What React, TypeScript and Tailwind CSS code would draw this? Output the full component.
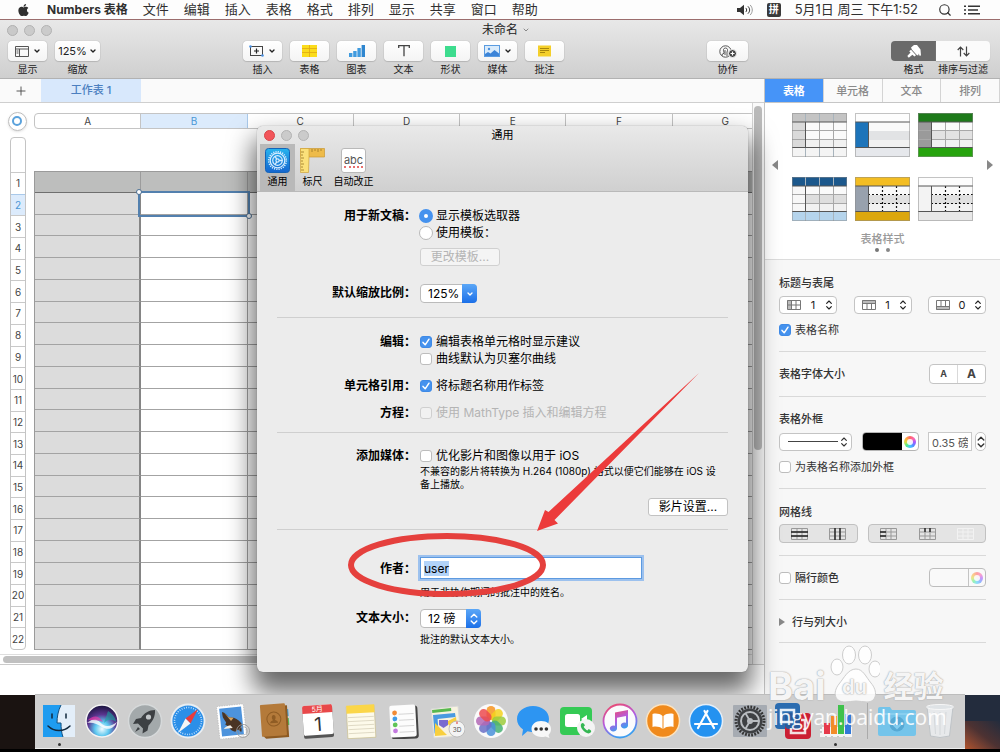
import * as React from "react";
import { useEffect, useRef, useState } from "react";
import { ChevronDown, Plus, Search } from "lucide-react";
import { FaApple } from "react-icons/fa";
import { clsx as cn } from "clsx";

const MENUS = ["文件", "编辑", "插入", "表格", "格式", "排列", "显示", "共享", "窗口", "帮助"];
const COLUMNS = ["A", "B", "C", "D", "E", "F", "G"];
const ROWS = Array.from({ length: 22 }, (_, i) => i + 1);

/* ---------- small shared controls ---------- */

const UpDown: React.FC<{ className?: string }> = ({ className }) => (
  <svg viewBox="0 0 8 12" className={cn("pointer-events-none h-3 w-2", className)} fill="none" stroke="currentColor" strokeWidth="1.4" strokeLinecap="round" strokeLinejoin="round">
    <path d="M1.2 4 4 1.2 6.8 4M1.2 8 4 10.8 6.8 8" />
  </svg>
);

interface CheckProps {
  label: string;
  defaultChecked?: boolean;
  disabled?: boolean;
  className?: string;
}

const Check: React.FC<CheckProps> = ({ label, defaultChecked, disabled, className }) => (
  <label className={cn("flex items-center gap-1", disabled && "text-[#b4b4b4]", className)}>
    <span className="relative flex h-3 w-3 shrink-0">
      <input
        type="checkbox"
        defaultChecked={defaultChecked}
        disabled={disabled}
        className="peer h-3 w-3 appearance-none rounded-[3px] border border-[#bdbdbd] bg-white checked:border-[#3f8ae6] checked:bg-[#4592ee] disabled:border-[#cfcfcf] disabled:bg-[#f1f1f1]"
      />
      <svg viewBox="0 0 12 12" className="pointer-events-none absolute inset-0 hidden peer-checked:block" fill="none" stroke="#fff" strokeWidth="1.5" strokeLinecap="round" strokeLinejoin="round">
        <path d="M3 6.4 5.2 8.8 9 3.2" />
      </svg>
    </span>
    {label}
  </label>
);

const Radio: React.FC<{ label: string; defaultChecked?: boolean }> = ({ label, defaultChecked }) => (
  <label className="-ml-px flex h-[17px] items-center gap-[3px]">
    <input
      type="radio"
      name="new-document"
      defaultChecked={defaultChecked}
      className="h-[14px] w-[14px] shrink-0 appearance-none rounded-full border border-[#b9b9b9] bg-white checked:border-[5px] checked:border-[#4592ee]"
    />
    {label}
  </label>
);

const TrafficLights: React.FC<{ active?: boolean; className?: string }> = ({ active, className }) => (
  <div className={cn("flex gap-[6px]", className)}>
    <button aria-label="关闭" className={cn("h-[11px] w-[11px] rounded-full border", active ? "border-[#d9454a] bg-[#f2555a]" : "border-[#b0b0b0] bg-[#c9c9c9]")} />
    <button aria-label="最小化" className="h-[11px] w-[11px] rounded-full border border-[#b3b3b3] bg-[#cbcbcb]" />
    <button aria-label="缩放窗口" className="h-[11px] w-[11px] rounded-full border border-[#b3b3b3] bg-[#cbcbcb]" />
  </div>
);

const ColorWheel: React.FC<{ faded?: boolean }> = ({ faded }) => (
  <span className={cn("flex h-3 w-3 items-center justify-center rounded-full bg-[conic-gradient(#f66,#f6a,#a5f,#58f,#4cf,#5e8,#dd4,#fa4,#f66)]", faded && "opacity-60")}>
    <span className="h-[6px] w-[6px] rounded-full bg-white/90" />
  </span>
);

/* ---------- menu bar ---------- */

const MenuBar = () => (
  <header className="flex h-5 shrink-0 items-center justify-between border-b border-[#9b6d6d] bg-[#fdfdfd] pr-5 pl-[17px] text-[13px] whitespace-nowrap text-[#303030]">
    <nav className="flex items-center gap-[15px]">
      <FaApple className="h-[14px] w-[13px]" />
      <button className="ml-[2px] text-[12px] font-bold">Numbers 表格</button>
      {MENUS.map((menu) => (
        <button key={menu} className="w-[26px]">{menu}</button>
      ))}
    </nav>
    <div className="flex items-center gap-5">
      <div className="flex items-center gap-[14px]">
        <svg viewBox="0 0 16 12" className="h-3 w-4" fill="none" stroke="#333" strokeLinecap="round">
          <path d="M0 4h3l4-3.2v10.4L3 8H0z" fill="#333" stroke="none" />
          <path d="M9 4.2c1 1 1 2.6 0 3.6M11.2 2.6c2 2 2 4.8 0 6.8" />
          <path d="M13.4 1.2c2.6 2.8 2.6 6.8 0 9.6" stroke="#999" />
        </svg>
        <span className="flex h-[14px] w-[14px] items-center justify-center rounded-xs bg-[#3a3a3a] text-[10px] font-bold text-white">拼</span>
        <span>5月1日 周三 下午1:52</span>
      </div>
      <div className="flex items-center gap-3">
        <Search className="h-[14px] w-[14px]" strokeWidth={2} />
        <svg viewBox="0 0 16 10" className="h-[10px] w-4" stroke="#333" strokeWidth="1.6">
          <path d="M0 1.2h2M4 1.2h12M0 5h2M4 5h10M0 8.8h2M4 8.8h12" />
        </svg>
      </div>
    </div>
  </header>
);

/* ---------- window toolbar ---------- */

const Chevron = () => <ChevronDown className="h-2 w-2" strokeWidth={4} />;

const TOOL_ICONS: Record<string, React.ReactNode> = {
  插入: (
    <svg viewBox="0 0 15 12" className="h-3 w-[15px]" fill="none" stroke="#444">
      <rect x="1.5" y="1.5" width="12" height="9" />
      <path d="M7.5 3.5v5M5 6h5" stroke="#222" strokeWidth="1.2" />
      <circle cx="1.5" cy="1.5" r="1.3" fill="#4a90e2" stroke="none" />
      <circle cx="13.5" cy="10.5" r="1.3" fill="#4a90e2" stroke="none" />
    </svg>
  ),
  表格: (
    <svg viewBox="0 0 15 12" className="h-3 w-[15px]">
      <rect width="15" height="12" fill="#fbdc1b" />
      <path d="M7.5 0v12M0 3.5h15M0 7.5h15" stroke="#e0a812" strokeWidth=".8" />
    </svg>
  ),
  图表: (
    <svg viewBox="0 0 16 12" className="h-3 w-4" fill="#3f9bdf">
      <rect y="8" width="3.4" height="4" />
      <rect x="4.2" y="6" width="3.4" height="6" />
      <rect x="8.4" y="3" width="3.4" height="9" />
      <rect x="12.6" width="3.4" height="12" fill="#2f86cf" />
    </svg>
  ),
  文本: (
    <svg viewBox="0 0 12 12" className="h-3 w-3" fill="none" stroke="#444" strokeWidth="1.3">
      <path d="M.7 3V.7h10.600V3M6 .7v10.600" />
    </svg>
  ),
  形状: <span className="h-[11px] w-[11px] bg-[#3ddc8e]" />,
  媒体: (
    <svg viewBox="0 0 16 12" className="h-3 w-4">
      <rect x=".5" y=".5" width="15" height="11" fill="#d9ebfb" stroke="#5a9be0" />
      <circle cx="5" cy="4" r="1.2" fill="#4a8fdd" />
      <path d="M1 11V9l3-2 2.500 1.500L10.500 5 15 8.500V11z" fill="#3c84d8" />
    </svg>
  ),
  批注: (
    <svg viewBox="0 0 13 12" className="h-3 w-[13px]">
      <rect y=".5" width="13" height="11" fill="#f4cf2a" />
      <path d="M2 3.500h9M2 5.500h9M2 7.500h5" stroke="#a8860c" strokeWidth="1" />
    </svg>
  ),
};

interface ToolProps {
  label: string;
  width?: string;
  menu?: boolean;
  children: React.ReactNode;
}

const Tool: React.FC<ToolProps> = ({ label, width = "w-[39px]", menu, children }) => (
  <button className={cn("flex flex-col items-center", width)}>
    <span className="flex h-5 w-full items-center justify-center gap-1 rounded-sm bg-linear-to-b from-white to-[#f4f4f4] shadow-[0_0_1px_#888,0_1px_1px_#bbb]">
      {children}
      {menu && <Chevron />}
    </span>
    <span className="mt-px text-[10px] leading-[14px]">{label}</span>
  </button>
);

const Toolbar = () => (
  <div className="shrink-0 border-b border-[#b2b2b2] bg-linear-to-b from-[#e8e8e8] to-[#cfcfcf] text-[#222]">
    <div className="grid h-5 grid-cols-3 items-center">
      <TrafficLights className="pl-[7px]" />
      <button className="flex items-center justify-center gap-1 pl-3 text-[12px]">
        未命名
        <ChevronDown className="h-2 w-2 text-[#888]" strokeWidth={3} />
      </button>
    </div>
    <div className="flex justify-between pt-px pr-[10px] pb-[2px] pl-2">
      <div className="flex gap-2">
        <Tool label="显示" menu>
          <svg viewBox="0 0 14 11" className="h-[11px] w-[14px]" fill="none" stroke="#555">
            <path d="M.5.5h13v10H.5zM.5 3h13M4.500 3v7.500M1.500 5h2M1.500 7h2" />
          </svg>
        </Tool>
        <Tool label="缩放" width="w-[45px]">
          <span className="flex items-center gap-[2px] text-[11px]">125%<Chevron /></span>
        </Tool>
      </div>
      <div className="flex gap-2">
        {Object.keys(TOOL_ICONS).map((name) => (
          <Tool key={name} label={name} menu={name === "插入" || name === "媒体"}>
            {TOOL_ICONS[name]}
          </Tool>
        ))}
      </div>
      <Tool label="协作" width="w-[41px]">
        <svg viewBox="0 0 18 13" className="h-[13px] w-[18px]" fill="none" stroke="#555">
          <circle cx="6.5" cy="6.5" r="5.7" />
          <path d="M3 11V9.500l2-1.300V7C4 5.500 4.200 3 6.500 3s2.500 2.500 1.500 4v4M6 5v5" />
          <circle cx="13.5" cy="8.5" r="4" fill="#444" stroke="#f8f8f8" />
          <path d="M13.500 6.500v4M11.500 8.500h4" stroke="#fff" strokeWidth="1.2" />
        </svg>
      </Tool>
      <div className="flex">
        <button className="flex w-[45px] flex-col items-center">
          <span className="flex h-5 w-full items-center justify-center rounded-l-sm bg-[#6a6a6a]">
            <svg viewBox="0 0 16 14" className="h-[14px] w-4" fill="#fff">
              <path d="M5 3.500 8 1h3l3.500 4.500.5 6-1.500.3-.7-2.300-.6 2-1.400-.4L6 5.800z" />
              <path d="m5 5.800 5 5.400-1.600 1.300-2-1.700-3.600 2.900L1.300 12l3.200-3.400-1.300-1.400z" />
            </svg>
          </span>
          <span className="mt-px text-[10px] leading-[14px]">格式</span>
        </button>
        <button className="flex w-[54px] flex-col items-center whitespace-nowrap">
          <span className="flex h-5 w-full items-center justify-center rounded-r-sm bg-[#fbfbfb] shadow-[0_1px_1px_#bbb]">
            <svg viewBox="0 0 13 11" className="h-[11px] w-[13px]" fill="none" stroke="#444" strokeWidth="1.2">
              <path d="M3.500 10.500v-9M.7 4 3.500 1.200 6.300 4M9.500.5v9M6.700 7l2.800 2.800L12.300 7" />
            </svg>
          </span>
          <span className="mt-px text-[10px] leading-[14px]">排序与过滤</span>
        </button>
      </div>
    </div>
  </div>
);

/* ---------- spreadsheet ---------- */

const SheetTable = () => (
  <table className="h-full w-[746px] table-fixed border-separate border-spacing-0 border-l border-[#9a9a9a]">
    <tbody>
      {ROWS.map((row) => (
        <tr key={row} className="h-1/22">
          {COLUMNS.map((col) => (
            <td
              key={col}
              aria-label={`${col}${row}`}
              className={cn(
                "border-b p-0",
                row === 1 && "border-t border-r border-[#6f6f6f] border-t-[#9a9a9a] border-r-[#9c9c9c] bg-[#bdbebd]",
                row > 1 && "border-[#a3a3a3]",
                row > 1 && col === "A" && "border-r-2 border-r-[#858585] bg-[#dcdcdc]",
                row > 1 && col !== "A" && "border-r bg-white",
                row === 2 && col === "B" && "relative"
              )}
            >
              {row === 2 && col === "B" && (
                <div className="absolute -inset-x-[3px] -top-[2px] -bottom-[3px] z-10 border-2 border-[#5380ae]">
                  <i className="absolute -top-1 -left-1 h-[6px] w-[6px] rounded-full border border-[#4b6f94] bg-white" />
                  <i className="absolute -right-1 -bottom-1 h-[6px] w-[6px] rounded-full border border-[#4b6f94] bg-white" />
                </div>
              )}
            </td>
          ))}
        </tr>
      ))}
    </tbody>
  </table>
);

const Sheet = () => (
  <section className="flex min-w-0 flex-1 flex-col bg-white">
    <div className="flex h-6 shrink-0 border-b border-[#cfcfcf] bg-[#fafafa]">
      <button aria-label="添加工作表" className="flex w-[41px] items-center justify-center text-[#444]">
        <Plus className="h-[14px] w-[14px]" strokeWidth={1.5} />
      </button>
      <button className="w-[100px] bg-[#d8e8fc] text-[11px] font-medium text-[#4c7fc0]">工作表 1</button>
    </div>
    <div className="flex min-h-0 flex-1 border-b border-[#cbcbcb]">
      <div className="flex min-w-0 flex-1 flex-col overflow-hidden">
        <div className="mt-2 flex h-5 shrink-0 items-center">
          <div className="flex w-[34px] shrink-0 justify-center">
            <button aria-label="全选" className="flex h-[19px] w-[19px] items-center justify-center rounded-full border border-[#bdbdbd] shadow-sm">
              <span className="h-[10px] w-[10px] rounded-full border-2 border-[#5ba2dc]" />
            </button>
          </div>
          <div className="flex h-4 w-[746px] shrink-0 rounded-sm border border-[#c4c4c4] text-[10px] text-[#444]">
            {COLUMNS.map((col) => (
              <span key={col} className={cn("flex flex-1 items-center justify-center border-r", col === "B" ? "border-[#a9c9ea] bg-[#dcebfc] text-[#4a97d6]" : "border-[#c4c4c4]")}>
                {col}
              </span>
            ))}
          </div>
        </div>
        <div className="mt-[6px] flex min-h-0 flex-1">
          <div className="w-[34px] shrink-0 pl-[10px]">
            <ol className="flex h-full w-4 flex-col rounded-sm border border-[#c4c4c4] text-[10px] text-[#444]">
              <li className="h-[34px] shrink-0" />
              {ROWS.map((row) => (
                <li key={row} className={cn("flex min-h-0 flex-1 items-center justify-center border-t leading-none", row === 2 ? "border-[#a9c9ea] bg-[#dcebfc] text-[#4a97d6]" : "border-[#c9c9c9]")}>
                  {row}
                </li>
              ))}
            </ol>
          </div>
          <div className="min-w-0 flex-1 overflow-hidden pt-[34px]">
            <SheetTable />
          </div>
        </div>
        <div className="mt-1 flex h-[10px] shrink-0 items-center border-t border-[#dedede] pr-1 pl-[3px]">
          <div className="h-[7px] w-full rounded-full bg-[#c0c0c0]" />
        </div>
      </div>
      <div className="w-3 shrink-0 border-l border-[#d4d4d4] bg-[#fafafa] py-[3px] pl-px">
        <div className="h-[62%] w-2 rounded-full bg-[#bababa]" />
      </div>
    </div>
    <div className="h-[30px] shrink-0" />
  </section>
);

/* ---------- inspector ---------- */

interface Style {
  head: string;
  side: string;
  foot: string;
  band: string;
  grid?: "solid" | "dotted";
  ticks?: boolean;
}

const STYLES: Style[] = [
  { head: "#c4c4c4", side: "#dadada", foot: "#f4f4f4", band: "#fafafa", grid: "solid", ticks: true },
  { head: "#fdfdfd", side: "#1d74ba", foot: "#e6e8ec", band: "#e2e3e5" },
  { head: "#1e7a1a", side: "#9a9a9a", foot: "#27a30e", band: "#e2e2e2", grid: "solid" },
  { head: "#1c588c", side: "#f7f7f7", foot: "#b5d4ec", band: "#dedede", grid: "solid", ticks: true },
  { head: "#f3bd23", side: "#98a1ad", foot: "#dca70e", band: "#e0e0e0", grid: "dotted" },
  { head: "#fdfdfd", side: "#f3f3f3", foot: "#e8e8e8", band: "#e0e0e0", grid: "dotted" },
];

const StyleThumb: React.FC<{ style: Style }> = ({ style }) => (
  <svg viewBox="0 0 55 44" className="h-[44px] w-[55px]">
    <rect width="55" height="44" fill="#fafafa" />
    <rect x="13" y="18" width="42" height="9" fill={style.band} />
    <rect x="13" y="27" width="42" height="8" fill="#f1f1f1" />
    <rect y="9" width="13" height="26" fill={style.side} />
    <rect width="55" height="9" fill={style.head} />
    <rect y="35" width="55" height="9" fill={style.foot} />
    {style.grid === "solid" && <path d="M27.500 9v26M41.500 9v26M0 17.500h55M0 26.500h55" stroke="#a8a8a8" />}
    {style.grid === "dotted" && <path d="M27.500 9v26M41.500 9v26M13 17.500h42M13 26.500h42" stroke="#111" strokeWidth="1.2" strokeDasharray="2 2" />}
    {style.ticks && <path d="M13.500 0v9M27.500 0v9M41.500 0v9M13.500 35v9M27.500 35v9M41.500 35v9" stroke="#a8b4bd" />}
    <path d="M0 9h55M0 34.500h55M13.500 9v26" stroke="#555" />
    <rect x=".5" y=".5" width="54" height="43" fill="none" stroke="#8a8a8a" strokeOpacity=".5" />
  </svg>
);

const MiniGrid: React.FC<{ bold?: string; faded?: boolean }> = ({ bold, faded }) => (
  <svg viewBox="0 0 17 12" className="h-3 w-[17px]" fill="none" stroke={faded ? "#f2f2f2" : "#999"}>
    <path d="M.5.5h16v11H.5zM.5 4h16M.5 8h16M6 .5v11M11 .5v11" />
    {bold && <path d={bold} stroke="#222" strokeWidth="1.4" />}
  </svg>
);

const COUNTS = [
  { label: "标题列", value: 1, fill: "M0 0h4v9H0z", lines: "M4.500 .5v9M9 .5v9M.5 5h13" },
  { label: "标题行", value: 1, fill: "M0 0h14v3.500H0z", lines: "M.5 3.500h13M5 3.500v6M9.500 3.500v6" },
  { label: "表尾行", value: 0, fill: "M0 6h14v4H0z", lines: "M.5 6.500h13M5 .5v6M9.500 .5v6" },
];

const Group: React.FC<{ className?: string; children: React.ReactNode }> = ({ className, children }) => (
  <div className={cn("border-b border-[#d9d9d9]", className)}>{children}</div>
);

const InspectorTabs = () => {
  const [active, setActive] = useState("表格");
  return (
    <div className="grid h-6 shrink-0 grid-cols-4 border-b border-[#c6c6c6] bg-[#fafafa] text-[11px]">
      {["表格", "单元格", "文本", "排列"].map((tab) => (
        <button
          key={tab}
          onClick={() => setActive(tab)}
          className={cn("border-r border-[#d4d4d4]", active === tab ? "bg-[#4694f8] font-bold text-white" : "font-medium text-[#8a8a8a]")}
        >
          {tab}
        </button>
      ))}
    </div>
  );
};

const Inspector = () => (
  <aside className="flex w-[236px] shrink-0 flex-col border-l border-[#c4c4c4] bg-[#f7f7f7] text-[11px] leading-4 text-[#333]">
    <InspectorTabs />
    <div className="flex shrink-0 items-center justify-between border-b border-[#dcdcdc] bg-white px-[7px] pt-[10px] pb-[7px] text-[#888]">
      <button aria-label="上一页" className="mb-9">
        <svg viewBox="0 0 6 10" className="h-[10px] w-[6px]" fill="currentColor"><path d="M6 0v10L0 5z" /></svg>
      </button>
      <div>
        <div className="grid grid-cols-3 gap-x-2 gap-y-5">
          {STYLES.map((style, i) => (
            <button key={i} aria-label={`样式 ${i + 1}`}><StyleThumb style={style} /></button>
          ))}
        </div>
        <p className="mt-[10px] text-center font-medium text-[#999]">表格样式</p>
        <div className="mt-px flex justify-center gap-[7px]">
          <i className="h-1 w-1 rounded-full bg-[#777]" />
          <i className="h-1 w-1 rounded-full bg-[#888]" />
        </div>
      </div>
      <button aria-label="下一页" className="mb-9">
        <svg viewBox="0 0 6 10" className="h-[10px] w-[6px]" fill="currentColor"><path d="M0 0v10l6-5z" /></svg>
      </button>
    </div>

    <div className="px-[14px]">
      <Group className="pt-[15px] pb-[13px]">
        <h3 className="font-medium">标题与表尾</h3>
        <div className="mt-[5px] flex justify-between">
          {COUNTS.map((item) => (
            <button key={item.label} aria-label={item.label} className="flex h-[18px] w-[58px] items-center justify-between rounded-sm border border-[#c4c4c4] bg-white pr-[3px] pl-[7px] text-[#222]">
              <svg viewBox="0 0 14 10" className="h-[10px] w-[14px]" fill="none" stroke="#777">
                <path d={item.fill} fill="#bbb" stroke="none" />
                <path d="M.5.5h13v9H.5z" />
                <path d={item.lines} />
              </svg>
              <span>{item.value}</span>
              <UpDown className="h-[10px]" />
            </button>
          ))}
        </div>
        <Check label="表格名称" defaultChecked className="mt-2" />
      </Group>

      <Group className="flex items-center justify-between py-3">
        <h3 className="font-medium">表格字体大小</h3>
        <div className="flex h-5 w-[57px] rounded-sm border border-[#c4c4c4] bg-white font-bold text-[#444]">
          <button aria-label="缩小字体" className="flex-1 border-r border-[#d9d9d9] text-[9px]">A</button>
          <button aria-label="放大字体" className="flex-1 text-[12px]">A</button>
        </div>
      </Group>

      <Group className="pt-[14px] pb-[13px]">
        <h3 className="font-medium">表格外框</h3>
        <div className="mt-[5px] flex items-center justify-between">
          <button aria-label="线条样式" className="flex h-[18px] w-[73px] items-center justify-between rounded-sm border border-[#c4c4c4] bg-white pr-[3px] pl-2">
            <span className="h-px w-[50px] bg-[#444]" />
            <UpDown className="h-[10px]" />
          </button>
          <button aria-label="边框颜色" className="flex h-[19px] w-[57px] overflow-hidden rounded-sm border border-[#b5b5b5] bg-white">
            <span className="h-full flex-1 bg-black" />
            <span className="flex h-full w-4 items-center justify-center"><ColorWheel /></span>
          </button>
          <div className="flex gap-[3px]">
            <input aria-label="边框宽度" defaultValue="0.35 磅" className="h-[19px] w-[44px] border border-[#c9c9c9] bg-white px-[3px] text-[11px] text-[#555]" />
            <button aria-label="调整宽度" className="flex h-[19px] w-[11px] items-center justify-center rounded-[5px] border border-[#c4c4c4] bg-white">
              <UpDown />
            </button>
          </div>
        </div>
        <Check label="为表格名称添加外框" className="mt-2" />
      </Group>

      <Group className="pt-[15px] pb-[12px]">
        <h3 className="font-medium">网格线</h3>
        <div className="mt-1 flex justify-between">
          <div className="flex h-[19px] w-[79px] rounded-sm border border-[#c1c1c1] bg-[#e4e4e4]">
            <button aria-label="横线" className="flex flex-1 items-center justify-center"><MiniGrid bold="M0 4h17M0 8h17" /></button>
            <button aria-label="竖线" className="flex flex-1 items-center justify-center"><MiniGrid bold="M6 0v12M11 0v12" /></button>
          </div>
          <div className="flex h-[19px] w-[118px] rounded-sm border border-[#c1c1c1] bg-[#e4e4e4]">
            <button aria-label="标题列网格线" className="flex flex-1 items-center justify-center"><MiniGrid bold="M0 4h6M0 8h6" /></button>
            <button aria-label="标题行网格线" className="flex flex-1 items-center justify-center"><MiniGrid bold="M6 0v4M11 0v4" /></button>
            <button aria-label="表尾网格线" className="flex flex-1 items-center justify-center"><MiniGrid faded /></button>
          </div>
        </div>
      </Group>

      <Group className="flex items-center justify-between py-3">
        <Check label="隔行颜色" className="font-medium" />
        <button aria-label="隔行填充颜色" className="flex h-[19px] w-[57px] rounded-sm border border-[#bdbdbd] bg-[#f9f9f9]">
          <span className="h-full flex-1 border-r border-[#c4c4c4]" />
          <span className="flex h-full w-4 items-center justify-center"><ColorWheel faded /></span>
        </button>
      </Group>

      <Group className="pt-[14px] pb-3">
        <button className="flex items-center gap-[7px] font-medium">
          <svg viewBox="0 0 6 8" className="h-2 w-[6px]" fill="#888"><path d="M0 0v8l6-4z" /></svg>
          行与列大小
        </button>
      </Group>
    </div>
  </aside>
);

/* ---------- preferences dialog ---------- */

const GearIcon: React.FC<{ className?: string }> = ({ className }) => (
  <svg viewBox="0 0 25 25" className={className} fill="none" stroke="#d5ecff">
    <defs>
      <linearGradient id="general" x2="0" y2="1">
        <stop stopColor="#27b4ee" />
        <stop offset="1" stopColor="#1465cf" />
      </linearGradient>
    </defs>
    <rect x=".5" y=".5" width="24" height="24" rx="3" fill="url(#general)" stroke="#1464b8" />
    <circle cx="12.5" cy="12.5" r="8.8" strokeWidth="1.6" strokeDasharray="1.2 1.1" />
    <circle cx="12.5" cy="12.5" r="7.3" strokeWidth="1.2" />
    <circle cx="12.5" cy="12.5" r="4.8" strokeWidth="1.2" />
    <circle cx="12.5" cy="12.5" r="1.6" strokeWidth="1.2" />
    <path d="M14.100 12.500h3.500M11.700 11.100 9.900 8.200M11.700 13.900l-1.800 2.900" strokeWidth="1.3" />
  </svg>
);

const RulerIcon: React.FC<{ className?: string }> = ({ className }) => (
  <svg viewBox="0 0 25 25" className={className}>
    <path d="M.5.5h24V9H.5z" fill="#eebb4a" stroke="#c89a35" strokeWidth=".7" />
    <path d="M.5.5H9V9l-.5 15.500h-8z" fill="#fbe07a" stroke="#cfa43c" strokeWidth=".7" />
    <path d="M1 4h3M1 7h2M1 10h3M1 13h2M1 16h3M1 19h2M1 22h3M12 1v3M15 1v2M18 1v3M21 1v2" stroke="#9b7626" strokeWidth=".8" />
  </svg>
);

const PANES = [
  { label: "通用", width: "w-[35px]", icon: <GearIcon className="h-[25px] w-[25px]" /> },
  { label: "标尺", width: "w-[35px]", icon: <RulerIcon className="h-[25px] w-[25px]" /> },
  {
    label: "自动改正",
    width: "w-[47px]",
    icon: (
      <span className="flex h-[25px] w-[25px] flex-col items-center justify-center rounded-[3px] border border-[#b9b9b9] bg-white text-[11px] leading-3 text-[#555]">
        abc
        <span className="w-[19px] border-b-2 border-dotted border-[#e8706e]" />
      </span>
    ),
  },
];

const FormRow: React.FC<{ label: string; className?: string; children: React.ReactNode }> = ({ label, className, children }) => (
  <div className={cn("grid grid-cols-[139px_1fr] gap-1", className)}>
    <div className="text-right leading-[17px] font-bold">{label}</div>
    <div>{children}</div>
  </div>
);

const Preferences = () => {
  const author = useRef<HTMLInputElement>(null);

  useEffect(() => {
    author.current?.focus();
    author.current?.select();
  }, []);

  return (
    <div role="dialog" aria-label="通用" className="absolute top-[126px] left-[257px] z-20 w-[491px] rounded-md bg-[#ececec] pb-[26px] text-[12px] text-black shadow-[0_0_1px_#666,0_16px_26px_4px_rgba(0,0,0,.6)]">
      <div className="rounded-t-md border-b border-[#b9b9b9] bg-linear-to-b from-[#e9e9e9] to-[#d0d0d0]">
        <div className="flex h-[18px] items-center">
          <TrafficLights active className="w-1/3 pl-[7px]" />
          <h2 className="w-1/3 text-center text-[11px]">通用</h2>
        </div>
        <div className="flex pl-[3px]">
          {PANES.map((pane, i) => (
            <button key={pane.label} className={cn("flex h-[47px] flex-col items-center pt-1 text-[10px] whitespace-nowrap", pane.width, i === 0 && "bg-[#b9b9b9]")}>
              {pane.icon}
              <span className="mt-px leading-[14px]">{pane.label}</span>
            </button>
          ))}
        </div>
      </div>

      <form className="px-5">
        <FormRow label="用于新文稿：" className="pt-[15px]">
          <Radio label="显示模板选取器" defaultChecked />
          <Radio label="使用模板：" />
          <button type="button" disabled className="mt-[7px] h-[18px] w-20 rounded-[3px] border border-[#d0d0d0] bg-[#f4f4f4] leading-4 text-[#b4b4b4]">更改模板...</button>
        </FormRow>
        <FormRow label="默认缩放比例：" className="mt-[18px] border-b border-[#cfcfcf] pb-[14px]">
          <div className="relative flex h-[19px] w-[57px]">
            <select aria-label="默认缩放比例" className="w-full appearance-none rounded-sm border border-[#bbb] bg-white pl-[7px] text-[12px] leading-4">
              <option>125%</option>
            </select>
            <span className="pointer-events-none absolute inset-y-0 right-0 flex w-[15px] items-center justify-center rounded-r-sm bg-linear-to-b from-[#5ba7f7] to-[#1a6fe8] text-white">
              <ChevronDown className="h-2 w-2" strokeWidth={4} />
            </span>
          </div>
        </FormRow>

        <FormRow label="编辑：" className="pt-[15px]">
          <Check label="编辑表格单元格时显示建议" defaultChecked className="h-[17px]" />
          <Check label="曲线默认为贝塞尔曲线" className="h-[17px]" />
        </FormRow>
        <FormRow label="单元格引用：" className="mt-[10px]">
          <Check label="将标题名称用作标签" defaultChecked className="h-[17px]" />
        </FormRow>
        <FormRow label="方程：" className="mt-[10px] border-b border-[#cfcfcf] pb-[11px]">
          <Check label="使用 MathType 插入和编辑方程" disabled className="h-[17px]" />
        </FormRow>

        <FormRow label="添加媒体：" className="pt-[14px]">
          <Check label="优化影片和图像以用于 iOS" className="h-[17px]" />
          <p className="mt-px mr-2 text-[10px] leading-[13px]">不兼容的影片将转换为 H.264 (1080p) 格式以便它们能够在 iOS 设备上播放。</p>
        </FormRow>
        <div className="flex justify-end border-b border-[#cfcfcf] pt-[7px] pb-[13px]">
          <button type="button" className="h-[18px] w-20 rounded-[3px] border border-[#c2c2c2] bg-white leading-4">影片设置...</button>
        </div>

        <FormRow label="作者：" className="items-center pt-[27px]">
          <input
            ref={author}
            aria-label="作者"
            defaultValue="user"
            className="block h-[22px] w-[222px] border border-[#5d9ae0] bg-white px-[3px] text-[12px] ring-2 ring-[#9cc1ee] outline-none selection:bg-[#b2d3f9] selection:text-black"
          />
        </FormRow>
        <FormRow label="" className="mt-[7px]">
          <p className="text-[10px] leading-[13px]">用于非协作期间的批注中的姓名。</p>
        </FormRow>
        <FormRow label="文本大小：" className="mt-[10px]">
          <div className="relative flex h-[19px] w-[61px]">
            <select aria-label="文本大小" className="w-full appearance-none rounded-sm border border-[#bbb] bg-white pl-[7px] text-[12px] leading-4">
              <option>12 磅</option>
            </select>
            <span className="pointer-events-none absolute inset-y-0 right-0 flex w-[15px] items-center justify-center rounded-r-sm bg-linear-to-b from-[#5ba7f7] to-[#1a6fe8] text-white">
              <UpDown />
            </span>
          </div>
          <p className="mt-[5px] text-[10px] leading-[13px]">批注的默认文本大小。</p>
        </FormRow>
      </form>
    </div>
  );
};

/* ---------- hand-drawn markup over the dialog ---------- */

const Markup = () => (
  <svg viewBox="0 0 352 225" className="pointer-events-none absolute top-[373px] left-[347px] z-30 h-[225px] w-[352px]" fill="#ec3b3b">
    <path d="M352 0 201.500 139l-3.500-2-8 21 21-7.500-3.500-3.500z" />
    <ellipse cx="100" cy="192" rx="96" ry="29" fill="none" stroke="#e5403d" strokeWidth="6" />
  </svg>
);

/* ---------- dock ---------- */

const Icon: React.FC<{ children: React.ReactNode }> = ({ children }) => (
  <svg viewBox="0 0 36 36" className="h-9 w-9">{children}</svg>
);

const DOCK: Array<{ name: string; running?: boolean; art: React.ReactNode }> = [
  {
    name: "访达",
    running: true,
    art: (
      <>
        <rect x="2" y="2" width="32" height="32" fill="#e3eef9" />
        <path d="M2 2h18c-3 6-4 12-4 18h4c0 5 .5 10 2 14H2z" fill="#1f9cf0" />
        <path d="M20 2c-3 6-4 12-4 18h4c0 5 .5 10 2 14" fill="none" stroke="#14507f" />
        <path d="M11 11v4M25 11v4M7 23c6 6 16 6 22 0" fill="none" stroke="#12283c" strokeWidth="1.5" strokeLinecap="round" />
      </>
    ),
  },
  {
    name: "Siri",
    art: (
      <>
        <defs>
          <radialGradient id="siri" cx=".5" cy=".75" r=".75">
            <stop stopColor="#f2fbff" />
            <stop offset=".3" stopColor="#5cc8ef" />
            <stop offset=".6" stopColor="#5b3590" />
            <stop offset="1" stopColor="#16123a" />
          </radialGradient>
        </defs>
        <circle cx="18" cy="18" r="16" fill="url(#siri)" stroke="#f4f4f4" strokeWidth="1.5" />
        <path d="M3 20c8-7 12-2 15 1s9 3 15-2c-4 8-10 8-15 5S9 19 3 20z" fill="#fff" fillOpacity=".8" />
        <path d="M24 8c6 4 8 8 8 11-4-3-8-3-12 1z" fill="#18a8a0" fillOpacity=".6" />
        <path d="M4 17c5-5 11-5 15 2-5-2-9-2-15-2z" fill="#e838a8" fillOpacity=".7" />
      </>
    ),
  },
  {
    name: "启动台",
    art: (
      <>
        <circle cx="18" cy="18" r="16.5" fill="#a3a9ab" stroke="#d6d9da" strokeWidth="1.5" />
        <path d="M28 7c-6 0-11 3-14 8l-5 1-3 5 5-.5 5 5-.5 5 5-3 1-5c4-4 7-9 6.500-15.500z" fill="#3c4043" />
        <circle cx="21.500" cy="14" r="2.6" fill="#c2c7c9" />
        <path d="m11 24-3 5 5-3z" fill="#3c4043" />
      </>
    ),
  },
  {
    name: "Safari",
    art: (
      <>
        <circle cx="18" cy="18" r="16.5" fill="#2b8fe8" stroke="#e9eef2" strokeWidth="1.8" />
        <circle cx="18" cy="18" r="13.5" fill="none" stroke="#d7ecff" strokeWidth="1.6" strokeDasharray=".8 1.56" />
        <path d="m28 6-7.500 14.500-5-5z" fill="#e93b3c" />
        <path d="M8 30 15.500 15.500l5 5z" fill="#f5f5f5" />
      </>
    ),
  },
  {
    name: "邮件",
    art: (
      <g transform="rotate(-6 18 18)">
        <rect x="4" y="2" width="27" height="33" fill="#fff" stroke="#bbb" strokeWidth=".8" strokeDasharray="1.5 1" />
        <rect x="6.500" y="4.500" width="22" height="28" fill="#4d93dc" />
        <path d="M9 8c3 1 5 4 6 6l5 1c4 2 6 4 8 8l-2 1c1 2 1 4 0 6l-3-3-3 2c-3-1-5-3-6-6l-3-2 1-2-2-4c-1-2-1-4-1-7z" fill="#4a3424" />
        <path d="m11 9 4 5 5 1-3 3z" fill="#d9a35c" />
        <path d="M9 25c2-2 4-3 7-3l2 3z" fill="#f4efe6" />
        <circle cx="28" cy="29" r="6.500" fill="none" stroke="#999" strokeWidth=".8" />
        <circle cx="28" cy="29" r="4" fill="none" stroke="#999" strokeWidth=".6" />
      </g>
    ),
  },
  {
    name: "通讯录",
    art: (
      <g transform="rotate(-4 18 18)">
        <rect x="28" y="7" width="4" height="7" fill="#4aa0d8" />
        <rect x="28" y="16" width="4" height="7" fill="#58b858" />
        <path d="M5 3h26v32H8l-3-3z" fill="#8d5a22" />
        <rect x="4" y="1" width="25" height="32" rx="1" fill="#b47a3a" />
        <circle cx="17" cy="16" r="7" fill="none" stroke="#8f5c24" />
        <path d="M13 20c0-2 2-2.500 3-3-1.500-2-1-5 1-5s2.500 3 1 5c1 .5 3 1 3 3z" fill="#8f5c24" />
      </g>
    ),
  },
  {
    name: "日历",
    art: (
      <g transform="rotate(-4 18 18)">
        <rect x="3" y="3" width="30" height="32" rx="2" fill="#555" />
        <rect x="3" y="2" width="30" height="30" rx="2" fill="#fff" />
        <path d="M3 10V4q0-2 2-2h26q2 0 2 2v6z" fill="#e8484a" />
        <text x="18" y="8.500" fontSize="7" fill="#fff" textAnchor="middle">5月</text>
        <text x="18" y="28" fontSize="19" fill="#333" textAnchor="middle">1</text>
      </g>
    ),
  },
  {
    name: "备忘录",
    art: (
      <g transform="rotate(-3 18 18)">
        <rect x="4" y="3" width="28" height="32" fill="#fdfaea" stroke="#c9bd8f" strokeWidth=".7" />
        <rect x="4" y="2" width="28" height="8" fill="#fbd648" />
        <path d="M5 14h26M5 18h26M5 22h26M5 26h26M5 30h26" stroke="#d8d2bb" strokeWidth=".8" />
      </g>
    ),
  },
  {
    name: "提醒事项",
    art: (
      <g transform="rotate(-3 18 18)">
        <rect x="5" y="3" width="27" height="33" rx="3" fill="#444" />
        <rect x="4" y="2" width="26" height="32" rx="2" fill="#fcfcfc" />
        <path d="M13 11h15M13 17h15M13 23h15M13 29h15" stroke="#ccc" strokeWidth=".8" />
        <circle cx="9" cy="9.500" r="2.400" fill="#f08a35" />
        <circle cx="9" cy="15.500" r="2.400" fill="#3f9be8" />
        <circle cx="9" cy="21.500" r="2.400" fill="#60c457" />
        <circle cx="9" cy="27.500" r="2.400" fill="#c47ae0" />
      </g>
    ),
  },
  {
    name: "地图",
    art: (
      <>
        <path d="m2 6 27-3 3 30-27 2z" fill="#f7f2e0" stroke="#d8d8d8" />
        <path d="m3 7 19-2 .3 3L3.300 10z" fill="#58b84f" />
        <path d="m4 12 22-2 .6 4-18 2 1 14-4 .5z" fill="#4a9ae0" />
        <path d="m6 20 12 12-12 1zM17 19l10-5 2 17z" fill="#f8cf3d" />
        <path d="M10 17h9v5l-4.500 3L10 22z" fill="#7a6bd0" />
        <circle cx="28" cy="26" r="8" fill="#f4f4f4" stroke="#aaa" strokeWidth=".7" />
        <text x="28" y="28.500" fontSize="6.500" fill="#555" textAnchor="middle">3D</text>
        <path d="M28 18.500v2.500" stroke="#d33" />
      </>
    ),
  },
  {
    name: "照片",
    art: (
      <>
        <circle cx="18" cy="18" r="17" fill="#fafafa" />
        {["#f7941e", "#f4d21f", "#9ccb3b", "#47b173", "#4a90d9", "#6a6fc5", "#b167b5", "#ec4a4f"].map((fill, i) => (
          <rect key={fill} x="13.5" y="3" width="9" height="14" rx="4.5" fill={fill} fillOpacity=".85" transform={`rotate(${i * 45} 18 18)`} />
        ))}
      </>
    ),
  },
  {
    name: "信息",
    art: (
      <>
        <path d="M17 3c9 0 16 5.500 16 13s-7 13-16 13c-2 0-4-.3-5.500-.8L6 33l1-6.500C3 24 1 20 1 16 1 8.500 8 3 17 3z" fill="#2d95f2" />
        <path d="M25 18c6 0 10 3.500 10 8 0 3-1 4.500-2.500 6l1 3-4-1.600c-8 2-14-2-14-7.400 0-4.500 4-8 9.500-8z" fill="#f8f8f8" />
        <circle cx="20" cy="26" r="1.8" fill="#333" />
        <circle cx="25.200" cy="26" r="1.8" fill="#333" />
        <circle cx="30.400" cy="26" r="1.8" fill="#333" />
      </>
    ),
  },
  {
    name: "FaceTime",
    art: (
      <>
        <rect x="1" y="4" width="32" height="28" rx="4" fill="#35ca55" />
        <rect x="6" y="11" width="15" height="13" rx="2.500" fill="#fff" />
        <path d="m22 16 6-4v8z" fill="#fff" />
        <circle cx="27" cy="25" r="9" fill="#f4f4f4" />
        <path d="M22.500 20.500c1.500-1.500 2.500 0 3.500 1.800l-1.300 1.500c.8 1.600 2 2.800 3.600 3.600l1.500-1.300c1.800 1 3.300 2 1.800 3.500-3.500 3.500-12.500-5.600-9.100-9.100z" fill="#35b653" />
      </>
    ),
  },
  {
    name: "iTunes",
    art: (
      <>
        <defs>
          <linearGradient id="itunes" x2=".4" y2="1">
            <stop stopColor="#f4475e" />
            <stop offset=".55" stopColor="#b55be0" />
            <stop offset="1" stopColor="#3d9df0" />
          </linearGradient>
        </defs>
        <circle cx="18" cy="18" r="16.5" fill="#fbfbfd" stroke="url(#itunes)" strokeWidth="1.8" />
        <path d="M13 9.500 26 7v15.500a3.600 3 0 1 1-2-2.700V13l-9 1.700v10.800a3.600 3 0 1 1-2-2.700z" fill="url(#itunes)" />
      </>
    ),
  },
  {
    name: "iBooks",
    art: (
      <>
        <circle cx="18" cy="18" r="16.5" fill="#f08a1c" stroke="#fbe3c0" strokeWidth="1.5" />
        <path d="M17.500 13c-2.500-2.500-7-3-10-2v13c3-1 7.500-.5 10 2zM18.500 13c2.500-2.500 7-3 10-2v13c-3-1-7.500-.5-10 2z" fill="#fff" />
      </>
    ),
  },
  {
    name: "App Store",
    art: (
      <>
        <circle cx="18" cy="18" r="16.5" fill="#2492f0" stroke="#e4eef8" strokeWidth="1.5" />
        <path d="m19.500 8-9.500 17M16.500 8 26 25M7 21h22" fill="none" stroke="#fff" strokeWidth="2.2" strokeLinecap="round" />
      </>
    ),
  },
  {
    name: "系统偏好设置",
    art: (
      <>
        <rect x="1" y="2" width="34" height="32" rx="1" fill="#a6abb2" />
        <circle cx="18" cy="18" r="14" fill="none" stroke="#333" strokeWidth="3" strokeDasharray="1.8 1.34" />
        <circle cx="18" cy="18" r="12.5" fill="#3e4043" />
        <circle cx="18" cy="18" r="9" fill="none" stroke="#b9bcc0" strokeWidth="2" />
        <circle cx="18" cy="18" r="3" fill="#b9bcc0" />
        <path d="M18 18h9M18 18l-4.500-7.800M18 18l-4.500 7.800" stroke="#b9bcc0" strokeWidth="1.8" />
      </>
    ),
  },
  {
    name: "远程桌面",
    art: (
      <>
        <rect x="0" y="0" width="25" height="26" rx="4" fill="#2b6cb0" />
        <rect x="10" y="10" width="26" height="26" rx="4" fill="#cb1f33" />
        <path d="M10 10h15v16H14q-4 0-4-4z" fill="#2b5c9c" />
        <path d="M18 19H6V7h13v7" fill="none" stroke="#e5eef8" strokeWidth="2.5" />
        <path d="M16 25v5h14V17h-4" fill="none" stroke="#f3dfe1" strokeWidth="2.5" />
      </>
    ),
  },
  {
    name: "Numbers",
    running: true,
    art: (
      <>
        <path d="M2 24h32v10H2z" fill="#f4f4f4" />
        <rect x="6" y="20" width="6" height="11" fill="#e5394a" />
        <rect x="13" y="13" width="6" height="18" fill="#f28c28" />
        <rect x="20" y="2" width="6" height="29" fill="#3fc14c" />
        <rect x="27" y="11" width="6" height="20" fill="#3279d8" />
        <path d="M3 24v2M3 28v2M8 33v1M14 33v1M20 33v1M26 33v1" stroke="#999" />
      </>
    ),
  },
];

const Dock = () => (
  <footer className="relative z-20 mx-[35px] flex h-[54px] border-b border-[#eee] bg-[#cfcfcf] pt-2 pr-[9px] pl-[6px] shadow-[0_-1px_0_#bdbdbd]">
    <div className="flex flex-1 justify-between">
      {DOCK.map((app) => (
        <button key={app.name} aria-label={app.name} className="flex flex-col items-center gap-1">
          <Icon>{app.art}</Icon>
          {app.running && <i className="h-[3px] w-[3px] rounded-full bg-[#333]" />}
        </button>
      ))}
    </div>
    <div className="mr-[9px] ml-[13px] h-9 w-px bg-[#aaa]" />
    <button aria-label="下载" className="mr-[7px] h-9 w-10">
      <svg viewBox="0 0 40 36">
        <path d="M1 6q0-2 2-2h10l2 3h22q2 0 2 2v22q0 2-2 2H3q-2 0-2-2z" fill="#74c4ea" />
        <path d="M1 11h38" stroke="#9ddaf5" />
        <circle cx="20" cy="21" r="7.5" fill="#56a9d4" />
        <path d="M20 16v8M16.500 21.500 20 25l3.500-3.500" fill="none" stroke="#84cdf0" strokeWidth="2" />
      </svg>
    </button>
    <button aria-label="废纸篓" className="h-9 w-8">
      <svg viewBox="0 0 32 36">
        <path d="M3 4h26l-3.500 29q-9.500 3-19 0z" fill="#eceff1" fillOpacity=".8" stroke="#bfc4c8" />
        <ellipse cx="16" cy="4" rx="13.500" ry="2.500" fill="#dfe3e6" stroke="#f7f7f7" />
        <path d="m10 9 1.500 22M16 9v23M22 9l-1.500 22" stroke="#d3d7da" />
      </svg>
    </button>
  </footer>
);

/* ---------- site watermark ---------- */

const Watermark = () => (
  <div className="pointer-events-none absolute top-[645px] left-[768px] z-40 text-white/90">
    <div className="flex items-end gap-1 font-bold [text-shadow:0_0_1px_#999,0_0_2px_#bbb]">
      <span className="h-[60px] pt-[9px] text-[38px] leading-[64px]">Bai</span>
      <span className="relative h-[60px] w-[50px]">
        <svg viewBox="0 0 50 60" className="absolute inset-0" fill="#fff" fillOpacity=".85" stroke="#cdcdcd">
          <ellipse cx="7" cy="22" rx="6" ry="8" />
          <ellipse cx="19" cy="10" rx="6.500" ry="9" />
          <ellipse cx="35" cy="10" rx="6.500" ry="9" />
          <ellipse cx="45" cy="24" rx="6" ry="8" />
          <path d="M26 24c7 0 10 8 15 14 7 8 6 19-4 19-4 0-7-1-11-1s-7 1-11 1C5 57 2 48 9 39c5-6 9-15 17-15z" />
        </svg>
        <span className="absolute inset-x-0 bottom-[6px] text-center text-[20px] leading-6">du</span>
      </span>
      <span className="text-[30px] leading-[38px]">经验</span>
    </div>
    <div className="font-['Open_Sans',sans-serif] text-[21px] leading-6">jingyan.baidu.com</div>
  </div>
);

export default function App() {
  return (
    <div
      lang="zh-CN"
      className="relative flex h-screen min-h-[700px] flex-col overflow-hidden bg-linear-to-r from-[#1a1311] from-50% to-[#232c3d] to-50% font-['Inter','Noto_Sans_CJK_SC',sans-serif]"
    >
      <MenuBar />
      <main className="flex min-h-0 flex-1 flex-col">
        <Toolbar />
        <div className="flex min-h-0 flex-1">
          <Sheet />
          <Inspector />
        </div>
      </main>
      <Preferences />
      <Markup />
      <Dock />
      <div className="absolute right-0 bottom-[3px] h-7 w-[35px] bg-linear-to-tr from-[#b2532a] via-[#4d3232] to-transparent" />
      <div className="h-[3px] shrink-0 bg-black" />
      <Watermark />
    </div>
  );
}
